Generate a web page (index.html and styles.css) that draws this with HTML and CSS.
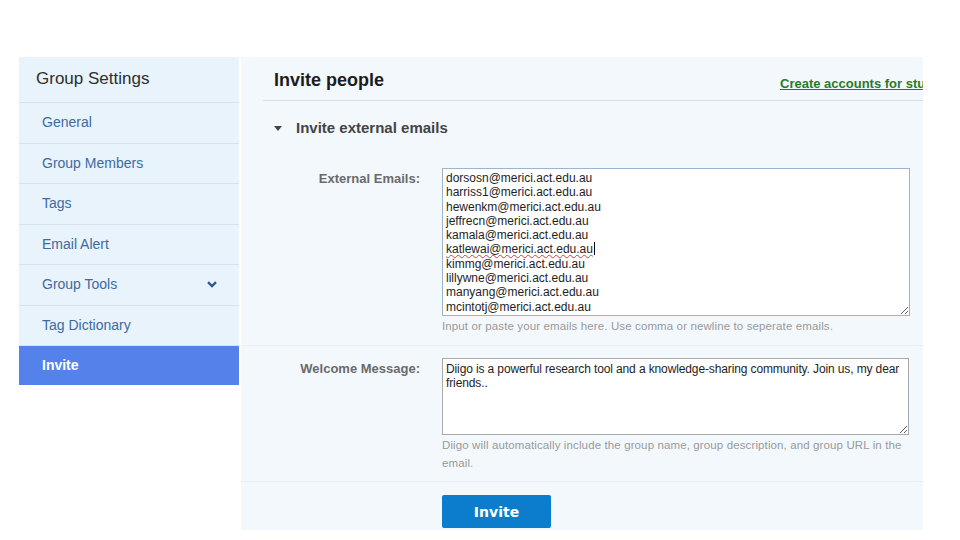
FILE: index.html
```html
<!DOCTYPE html>
<html lang="en">
<head>
<meta charset="utf-8">
<title>Group Settings - Invite</title>
<link rel="stylesheet" href="styles.css">
</head>
<body>
<div class="page">
  <nav class="sidebar">
    <div class="side-head">Group Settings</div>
    <a class="side-item">General</a>
    <a class="side-item">Group Members</a>
    <a class="side-item">Tags</a>
    <a class="side-item">Email Alert</a>
    <a class="side-item side-item-tools">Group Tools
      <svg class="chev" width="10" height="7" viewBox="0 0 10 7"><path d="M1 1.2 L5 5 L9 1.2" fill="none" stroke="#2a5a90" stroke-width="2.4"/></svg>
    </a>
    <a class="side-item">Tag Dictionary</a>
    <a class="side-item side-item-active">Invite</a>
  </nav>
  <main class="main">
    <div class="main-head">
      <h1 class="title">Invite people</h1>
      <div class="head-link"><a>Create accounts for students</a></div>
    </div>
    <h2 class="section-title"><span class="tri"></span>Invite external emails</h2>
    <div class="form-row row-emails">
      <label class="form-label">External Emails:</label>
      <div class="field">
        <div class="textbox tb-emails">dorsosn@merici.act.edu.au<br>harriss1@merici.act.edu.au<br>hewenkm@merici.act.edu.au<br>jeffrecn@merici.act.edu.au<br>kamala@merici.act.edu.au<br><span class="spell">katlewai@merici.act.edu.au</span><span class="caret"></span><br>kimmg@merici.act.edu.au<br>lillywne@merici.act.edu.au<br>manyang@merici.act.edu.au<br>mcintotj@merici.act.edu.au</div>
        <p class="help">Input or paste your emails here. Use comma or newline to seperate emails.</p>
      </div>
    </div>
    <div class="form-row row-message">
      <label class="form-label">Welcome Message:</label>
      <div class="field">
        <div class="textbox tb-message">Diigo is a powerful research tool and a knowledge-sharing community. Join us, my dear friends..</div>
        <p class="help">Diigo will automatically include the group name, group description, and group URL in the email.</p>
      </div>
    </div>
    <div class="actions">
      <button class="btn-invite">Invite</button>
    </div>
  </main>
</div>
</body>
</html>
```

FILE: styles.css
```css
html, body {
  margin: 0;
  padding: 0;
  background: #ffffff;
}

body {
  font-family: "Liberation Sans", Arial, sans-serif;
}

.page {
  display: flex;
  align-items: flex-start;
  gap: 2px;
  padding: 57px 0 0 19px;
}

/* Sidebar */
.sidebar {
  width: 220px;
  background: #e9f3fc;
  display: flex;
  flex-direction: column;
}

.side-head {
  height: 45px;
  line-height: 44px;
  padding-left: 17px;
  font-size: 17px;
  color: #2e2e2e;
  border-bottom: 1px solid #d6e2ed;
}

.side-item {
  height: 39.5px;
  line-height: 39.5px;
  padding-left: 23px;
  padding-right: 20px;
  font-size: 14px;
  color: #3d6b9f;
  border-bottom: 1px solid #d6e2ed;
  display: flex;
  align-items: center;
  justify-content: space-between;
}

.chev {
  margin-right: 2px;
}

.side-item-active {
  height: 39px;
  background: #5383ea;
  color: #ffffff;
  font-weight: bold;
  border-bottom: none;
}

/* Main panel */
.main {
  width: 682px;
  height: 473px;
  background: #f3f8fd;
  overflow: hidden;
}

.main-head {
  margin-left: 22px;
  height: 43px;
  padding-left: 11px;
  border-bottom: 1px solid #d8e2ea;
  display: flex;
  align-items: center;
}

.title {
  flex: 1;
  margin: 0;
  padding-top: 3px;
  font-size: 18px;
  font-weight: bold;
  color: #1c1c1c;
}

.head-link {
  width: 143px;
  overflow: hidden;
  white-space: nowrap;
  padding-top: 8px;
}

.head-link a {
  font-size: 13px;
  font-weight: bold;
  color: #2b7a22;
  text-decoration: underline;
}

.section-title {
  margin: 17px 0 0 33px;
  height: 20px;
  line-height: 20px;
  font-size: 15px;
  font-weight: bold;
  color: #444444;
  display: flex;
  align-items: center;
}

.tri {
  width: 0;
  height: 0;
  border-left: 4px solid transparent;
  border-right: 4px solid transparent;
  border-top: 5px solid #444444;
  margin-right: 14px;
}

.form-row {
  display: grid;
  grid-template-columns: 179px 468px;
  column-gap: 22px;
  border-bottom: 1px solid #e8eff6;
}

.row-emails {
  margin-top: 30px;
  padding-bottom: 10px;
}

.row-message {
  padding-top: 12px;
  padding-bottom: 9px;
}

.form-label {
  text-align: right;
  padding-top: 3px;
  font-size: 13px;
  line-height: 16px;
  font-weight: bold;
  color: #6a6a6a;
}

.field {
  display: flex;
  flex-direction: column;
}

.textbox {
  box-sizing: border-box;
  background: #ffffff;
  font-size: 12px;
  line-height: 14.3px;
  color: #1e1e1e;
  padding: 2px 3px;
  resize: both;
  overflow: hidden;
}

.tb-emails {
  height: 148px;
  border: 1px solid #9db4ce;
}

.tb-message {
  width: 467px;
  height: 77px;
  border: 1px solid #a9a9a9;
  padding: 3px 2px 2px 3px;
  letter-spacing: -0.12px;
}

.spell {
  text-decoration: underline wavy #d23a3a;
  text-decoration-thickness: 1px;
}

.caret {
  display: inline-block;
  width: 1px;
  height: 13px;
  background: #000000;
  vertical-align: -2px;
  margin-left: 1px;
}

.help {
  margin: 1px 0 0;
  font-size: 11.5px;
  line-height: 18px;
  letter-spacing: 0.12px;
  color: #9a9a9a;
}

.actions {
  padding: 13px 0 0 201px;
}

.btn-invite {
  width: 109px;
  height: 33px;
  border: none;
  border-radius: 2px;
  background: #0b7dcc;
  color: #ffffff;
  font-family: "DejaVu Sans", Verdana, sans-serif;
  font-weight: bold;
  font-size: 14px;
  padding: 0;
}
```
